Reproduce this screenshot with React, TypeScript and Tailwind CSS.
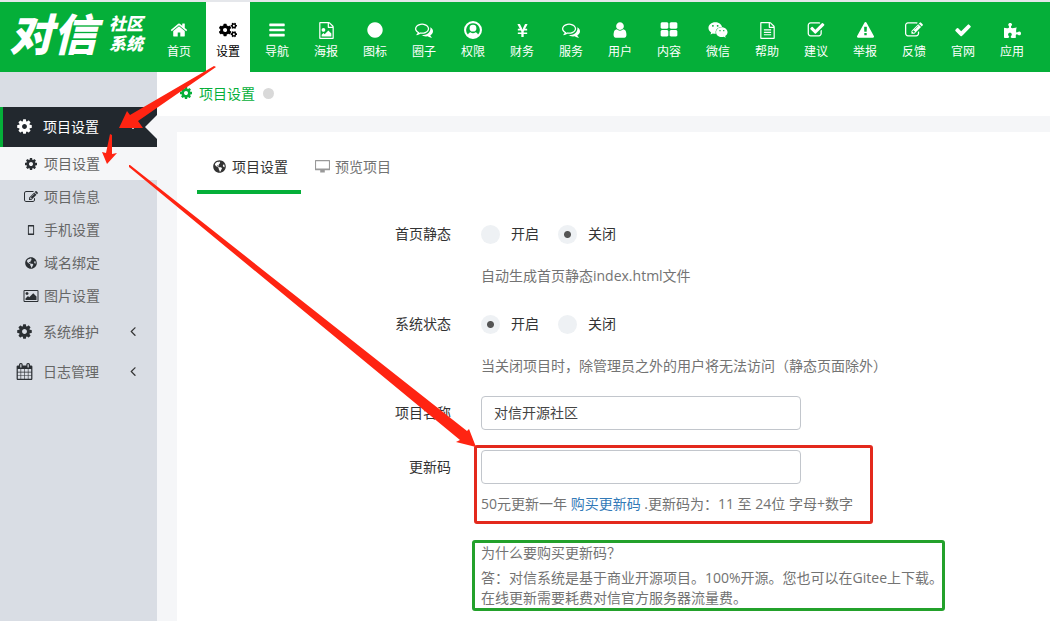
import React, { useState } from 'react';
import { FaCogs, FaGlobeAmericas, FaPuzzlePiece, FaWeixin, FaYenSign } from 'react-icons/fa';

const paths = {
    home: 'M1472 992v480q0 26-19 45t-45 19h-384v-384h-256v384h-384q-26 0-45-19t-19-45v-480q0-1 .5-3t.5-3l575-474 575 474q1 2 1 6zm223-69l-62 74q-8 9-21 11h-3q-13 0-21-7l-692-577-692 577q-12 8-24 7-13-2-21-11l-62-74q-8-10-7-23.5t11-21.5l719-599q32-26 76-26t76 26l244 204v-195q0-14 9-23t23-9h192q14 0 23 9t9 23v408l219 182q10 8 11 21.5t-7 23.5z',
    cog: 'M1152 896q0-106-75-181t-181-75-181 75-75 181 75 181 181 75 181-75 75-181zm512-109v222q0 12-8 23t-20 13l-185 28q-19 54-39 91 35 50 107 138 10 12 10 25t-9 23q-27 37-99 108t-94 71q-12 0-26-9l-138-108q-44 23-91 38-16 136-29 186-7 28-36 28h-222q-14 0-24.5-8.5t-11.5-21.5l-28-184q-49-16-90-37l-141 107q-10 9-25 9-14 0-25-11-126-114-165-168-7-10-7-23 0-12 8-23 15-21 51-66.5t54-70.5q-27-50-41-99l-183-27q-13-2-21-12.5t-8-23.5v-222q0-12 8-23t19-13l186-28q14-46 39-92-40-57-107-138-10-12-10-24 0-10 9-23 26-36 98.5-107.5t94.5-71.5q13 0 26 10l138 107q44-23 91-38 16-136 29-186 7-28 36-28h222q14 0 24.5 8.5t11.5 21.5l28 184q49 16 90 37l142-107q9-9 24-9 13 0 25 10 129 119 165 170 7 8 7 22 0 12-8 23-15 21-51 66.5t-54 70.5q26 50 41 98l183 28q13 2 21 12.5t8 23.5z',
    bars: 'M1664 1344v128q0 26-19 45t-45 19h-1408q-26 0-45-19t-19-45v-128q0-26 19-45t45-19h1408q26 0 45 19t19 45zm0-512v128q0 26-19 45t-45 19h-1408q-26 0-45-19t-19-45v-128q0-26 19-45t45-19h1408q26 0 45 19t19 45zm0-512v128q0 26-19 45t-45 19h-1408q-26 0-45-19t-19-45v-128q0-26 19-45t45-19h1408q26 0 45 19t19 45z',
    fileImage: 'M1596 380q28 28 48 76t20 88v1152q0 40-28 68t-68 28h-1344q-40 0-68-28t-28-68v-1600q0-40 28-68t68-28h896q40 0 88 20t76 48zm-444-244v376h376q-10-29-22-41l-313-313q-12-12-41-22zm384 1528v-1024h-416q-40 0-68-28t-28-68v-416h-768v1536h1280zm-128-448v320h-1024v-192l192-192 128 128 384-384zm-832-192q-80 0-136-56t-56-136 56-136 136-56 136 56 56 136-56 136-136 56z',
    circle: 'M1664 896q0 209-103 385.5t-279.5 279.5-385.5 103-385.5-103-279.5-279.5-103-385.5 103-385.5 279.5-279.5 385.5-103 385.5 103 279.5 279.5 103 385.5z',
    comments: 'M704 384q-153 0-286 52t-211.5 141-78.5 191q0 82 53 158t149 132l97 56-35 84q34-20 62-39l44-31 53 10q78 14 153 14 153 0 286-52t211.5-141 78.5-191-78.5-191-211.5-141-286-52zm0-128q191 0 353.5 68.5t256.5 186.5 94 257-94 257-256.5 186.5-353.5 68.5q-86 0-176-16-124 88-278 128-36 9-86 16h-3q-11 0-20.5-8t-11.5-21q-1-3-1-6.5t.5-6.5 2-6l2.5-5 3.5-5.5 4-5 4.5-5 4-4.5q5-6 23-25t26-29.5 22.5-29 25-38.5 20.5-44q-124-72-195-177t-71-224q0-139 94-257t256.5-186.5 353.5-68.5zm822 1169q10 24 20.5 44t25 38.5 22.5 29 26 29.5 23 25q1 1 4 4.5t4.5 5 4 5 3.5 5.5l2.5 5 2 6 .5 6.5-1 6.5q-3 14-13 22t-22 7q-50-7-86-16-154-40-278-128-90 16-176 16-271 0-472-132 58 4 88 4 161 0 309-45t264-129q125-92 192-212t67-254q0-77-23-152 129 71 204 178t75 230q0 120-71 224.5t-195 176.5z',
    userCircle: 'M896 0a896 896 0 1 0 0 1792a896 896 0 1 0 0-1792zm0 220a676 676 0 0 1 500 1130q-70-190-250-220q-110 90-250 90t-250-90q-180 30-250 220a676 676 0 0 1 500-1130zm0 150a340 340 0 1 0 0 680a340 340 0 1 0 0-680z',
    user: 'M1536 1399q0 109-62.5 187t-150.5 78h-854q-88 0-150.5-78t-62.5-187q0-85 8.5-160.5t31.5-152 58.5-131 94-89 134.5-34.5q131 128 313 128t313-128q76 0 134.5 34.5t94 89 58.5 131 31.5 152 8.5 160.5zm-256-887q0 159-112.5 271.5t-271.5 112.5-271.5-112.5-112.5-271.5 112.5-271.5 271.5-112.5 271.5 112.5 112.5 271.5z',
    blocks: 'M832 1024v384q0 52-38 90t-90 38h-512q-52 0-90-38t-38-90v-384q0-52 38-90t90-38h512q52 0 90 38t38 90zm0-768v384q0 52-38 90t-90 38h-512q-52 0-90-38t-38-90v-384q0-52 38-90t90-38h512q52 0 90 38t38 90zm896 768v384q0 52-38 90t-90 38h-512q-52 0-90-38t-38-90v-384q0-52 38-90t90-38h512q52 0 90 38t38 90zm0-768v384q0 52-38 90t-90 38h-512q-52 0-90-38t-38-90v-384q0-52 38-90t90-38h512q52 0 90 38t38 90z',
    fileText: 'M1596 380q28 28 48 76t20 88v1152q0 40-28 68t-68 28h-1344q-40 0-68-28t-28-68v-1600q0-40 28-68t68-28h896q40 0 88 20t76 48zm-444-244v376h376q-10-29-22-41l-313-313q-12-12-41-22zm384 1528v-1024h-416q-40 0-68-28t-28-68v-416h-768v1536h1280zm-1024-864q0-14 9-23t23-9h704q14 0 23 9t9 23v64q0 14-9 23t-23 9h-704q-14 0-23-9t-9-23v-64zm736 224q14 0 23 9t9 23v64q0 14-9 23t-23 9h-704q-14 0-23-9t-9-23v-64q0-14 9-23t23-9h704zm0 256q14 0 23 9t9 23v64q0 14-9 23t-23 9h-704q-14 0-23-9t-9-23v-64q0-14 9-23t23-9h704z',
    checkSquare: 'M1472 930v318q0 119-84.5 203.5t-203.5 84.5h-832q-119 0-203.5-84.5t-84.5-203.5v-832q0-119 84.5-203.5t203.5-84.5h832q63 0 117 25 15 7 18 23 3 17-9 29l-49 49q-10 10-23 10-3 0-9-2-23-6-45-6h-832q-66 0-113 47t-47 113v832q0 66 47 113t113 47h832q66 0 113-47t47-113v-254q0-13 9-22l64-64q10-10 23-10 6 0 12 3 20 8 20 29zm231-489l-814 814q-24 24-57 24t-57-24l-430-430q-24-24-24-57t24-57l110-110q24-24 57-24t57 24l263 263 647-647q24-24 57-24t57 24l110 110q24 24 24 57t-24 57z',
    warning: 'M1024 1375v-190q0-14-9.5-23.5t-22.5-9.5h-192q-13 0-22.5 9.5t-9.5 23.5v190q0 14 9.5 23.5t22.5 9.5h192q13 0 22.5-9.5t9.5-23.5zm-2-374l18-459q0-12-10-19-13-11-24-11h-220q-11 0-24 11-10 7-10 21l17 457q0 10 10 16.5t24 6.5h185q14 0 23.5-6.5t10.5-16.5zm-14-934l768 1408q35 63-2 126-17 29-46.5 46t-63.5 17h-1536q-34 0-63.5-17t-46.5-46q-37-63-2-126l768-1408q17-31 47-49t65-18 65 18 47 49z',
    edit: 'M888 1184l116-116-152-152-116 116v56h96v96h56zm440-720q-16-16-33 1l-350 350q-17 17-1 33t33-1l350-350q17-17 1-33zm80 594v190q0 119-84.5 203.5t-203.5 84.5h-832q-119 0-203.5-84.5t-84.5-203.5v-832q0-119 84.5-203.5t203.5-84.5h832q63 0 117 25 15 7 18 23 3 17-9 29l-49 49q-14 14-32 8-23-6-45-6h-832q-66 0-113 47t-47 113v832q0 66 47 113t113 47h832q66 0 113-47t47-113v-126q0-13 9-22l64-64q15-15 35-7t20 29zm-96-738l288 288-672 672h-288v-288zm444 132l-92 92-288-288 92-92q28-28 68-28t68 28l152 152q28 28 28 68t-28 68z',
    check: 'M1671 566q0 40-28 68l-724 724-136 136q-28 28-68 28t-68-28l-136-136-362-362q-28-28-28-68t28-68l136-136q28-28 68-28t68 28l294 295 656-657q28-28 68-28t68 28l136 136q28 28 28 68z',
    picture: 'M576 576q0 80-56 136t-136 56-136-56-56-136 56-136 136-56 136 56 56 136zm1024 384v448h-1408v-192l320-320 160 160 512-512zm96-704h-1600q-13 0-22.5 9.5t-9.5 22.5v1216q0 13 9.5 22.5t22.5 9.5h1600q13 0 22.5-9.5t9.5-22.5v-1216q0-13-9.5-22.5t-22.5-9.5zm160 32v1216q0 66-47 113t-113 47h-1600q-66 0-113-47t-47-113v-1216q0-66 47-113t113-47h1600q66 0 113 47t47 113z',
    calendar: 'M192 1664h288v-288h-288v288zm352 0h320v-288h-320v288zm-352-352h288v-320h-288v320zm352 0h320v-320h-320v320zm-352-384h288v-288h-288v288zm736 736h320v-288h-320v288zm-384-736h320v-288h-320v288zm768 736h288v-288h-288v288zm-384-352h320v-320h-320v320zm-352-864v-288q0-13-9.5-22.5t-22.5-9.5h-64q-13 0-22.5 9.5t-9.5 22.5v288q0 13 9.5 22.5t22.5 9.5h64q13 0 22.5-9.5t9.5-22.5zm736 864h288v-320h-288v320zm-384-384h320v-288h-320v288zm384 0h288v-288h-288v288zm32-480v-288q0-13-9.5-22.5t-22.5-9.5h-64q-13 0-22.5 9.5t-9.5 22.5v288q0 13 9.5 22.5t22.5 9.5h64q13 0 22.5-9.5t9.5-22.5zm384-64v1280q0 52-38 90t-90 38h-1408q-52 0-90-38t-38-90v-1280q0-52 38-90t90-38h128v-96q0-66 47-113t113-47h64q66 0 113 47t47 113v96h384v-96q0-66 47-113t113-47h64q66 0 113 47t47 113v96h128q52 0 90 38t38 90z',
    mobile: 'M560 256h672q60 0 60 60v1160q0 60-60 60h-672q-60 0-60-60v-1160q0-60 60-60zm60 200v880h552v-880z',
    desktop: 'M64 128h1664q64 0 64 64v1088q0 64-64 64h-560v256h-544v-256h-560q-64 0-64-64v-1088q0-64 64-64zm64 128v864h1536v-864z',
    angleLeft: 'M1203 544q0 13-10 23l-393 393 393 393q10 10 10 23t-10 23l-50 50q-10 10-23 10t-23-10l-466-466q-10-10-10-23t10-23l466-466q10-10 23-10t23 10l50 50q10 10 10 23z',
    angleDown: 'M1395 736q0 13-10 23l-466 466q-10 10-23 10t-23-10l-466-466q-10-10-10-23t10-23l50-50q10-10 23-10t23 10l393 393 393-393q10-10 23-10t23 10l50 50q10 10 10 23z',
};

type IconName = keyof typeof paths;

const Icon = ({ name, className }: { name: IconName; className?: string }) => (
    <svg viewBox="0 0 1792 1792" fill="currentColor" fillRule="evenodd" overflow="visible" aria-hidden="true" className={className}>
        <path d={paths[name]} />
    </svg>
);

const navItems: { label: string; icon: React.ReactNode }[] = [
    { label: '首页', icon: <Icon name="home" className="size-[18px]" /> },
    { label: '设置', icon: <FaCogs className="size-[18px]" /> },
    { label: '导航', icon: <Icon name="bars" className="size-[18px]" /> },
    { label: '海报', icon: <Icon name="fileImage" className="size-[17px]" /> },
    { label: '图标', icon: <Icon name="circle" className="size-[18px]" /> },
    { label: '圈子', icon: <Icon name="comments" className="size-[18px]" /> },
    { label: '权限', icon: <Icon name="userCircle" className="size-[18px]" /> },
    { label: '财务', icon: <FaYenSign className="size-[15px]" /> },
    { label: '服务', icon: <Icon name="comments" className="size-[18px]" /> },
    { label: '用户', icon: <Icon name="user" className="size-[18px]" /> },
    { label: '内容', icon: <Icon name="blocks" className="size-[18px]" /> },
    { label: '微信', icon: <FaWeixin className="size-[20px]" /> },
    { label: '帮助', icon: <Icon name="fileText" className="size-[17px]" /> },
    { label: '建议', icon: <Icon name="checkSquare" className="size-[18px]" /> },
    { label: '举报', icon: <Icon name="warning" className="size-[17px]" /> },
    { label: '反馈', icon: <Icon name="edit" className="size-[18px]" /> },
    { label: '官网', icon: <Icon name="check" className="size-[18px]" /> },
    { label: '应用', icon: <FaPuzzlePiece className="size-[17px]" /> },
];

const subItems: { label: string; icon: React.ReactNode }[] = [
    { label: '项目设置', icon: <Icon name="cog" className="size-[14px]" /> },
    { label: '项目信息', icon: <Icon name="edit" className="size-[14px]" /> },
    { label: '手机设置', icon: <Icon name="mobile" className="size-[14px]" /> },
    { label: '域名绑定', icon: <FaGlobeAmericas className="size-[12px]" /> },
    { label: '图片设置', icon: <Icon name="picture" className="size-[14px]" /> },
];

const Header = () => {
    const [active, setActive] = useState('设置');

    return (
        <header className="flex h-[72px] overflow-hidden border-t-2 border-gray-200 bg-[#05af39] text-white">
            <a href="#" className="flex w-[157px] shrink-0 items-center gap-3 pb-[6px] pl-[9px] font-black italic">
                <span className="text-[44px] leading-[44px]">对信</span>
                <span className="flex flex-col text-[17px] leading-5">
                    <span>社区</span>
                    <span>系统</span>
                </span>
            </a>
            <nav className="flex">
                {navItems.map((item) => (
                    <button
                        key={item.label}
                        type="button"
                        onClick={() => setActive(item.label)}
                        className={`mr-[5px] flex w-11 shrink-0 flex-col items-center pt-[18px] text-[12px] leading-[18px] ${active === item.label ? 'bg-white text-black' : ''}`}
                    >
                        <span className="flex h-5 items-center">{item.icon}</span>
                        <span className="mt-[3px]">{item.label}</span>
                    </button>
                ))}
            </nav>
        </header>
    );
};

const Sidebar = () => (
    <aside className="w-[157px] shrink-0 bg-[#d9dde4] pt-[35px] text-[14px] text-[#666]">
        <a href="#" className="relative flex h-10 items-center border-l-[3px] border-[#05af39] bg-[#22282e] pb-[2px] pl-[13px] text-white">
            <Icon name="cog" className="size-[17px]" />
            <span className="ml-[10px]">项目设置</span>
            <Icon name="angleDown" className="ml-[26px] size-[16px]" />
            <svg viewBox="0 0 12 24" className="absolute top-2 right-0 h-6 w-3" fill="#f5f6f8">
                <path d="M12 0L0 12l12 12z" />
            </svg>
        </a>
        <ul>
            {subItems.map((item, i) => (
                <li key={item.label}>
                    <a href="#" className={`flex h-[33px] items-center pl-[22px] ${i === 0 ? 'bg-[#f5f6f8]' : ''}`}>
                        <span className="flex w-[18px] justify-center text-[#2b2f33]">{item.icon}</span>
                        <span className="ml-1">{item.label}</span>
                    </a>
                </li>
            ))}
        </ul>
        <a href="#" className="flex h-10 items-center pb-[2px] pl-4">
            <Icon name="cog" className="size-[17px] text-[#2b2f33]" />
            <span className="ml-[10px]">系统维护</span>
            <Icon name="angleLeft" className="ml-[26px] size-[16px] text-[#333]" />
        </a>
        <a href="#" className="flex h-10 items-center pb-[2px] pl-4">
            <Icon name="calendar" className="size-[17px] text-[#2b2f33]" />
            <span className="ml-[10px]">日志管理</span>
            <Icon name="angleLeft" className="ml-[26px] size-[16px] text-[#333]" />
        </a>
    </aside>
);

const Radios = ({ name, label, initial }: { name: string; label: string; initial: string }) => {
    const [value, setValue] = useState(initial);

    return (
        <div role="radiogroup" aria-label={label} className="flex h-5 items-center gap-[19px]">
            {['开启', '关闭'].map((option) => (
                <label key={option} className="flex items-center gap-[11px] text-[#333]">
                    <input
                        type="radio"
                        name={name}
                        checked={value === option}
                        onChange={() => setValue(option)}
                        className="size-[19px] appearance-none rounded-full bg-[#eef1f4] checked:bg-[radial-gradient(circle,#555_3px,#eef1f4_4px)]"
                    />
                    {option}
                </label>
            ))}
        </div>
    );
};

const SettingsForm = () => {
    const [title, setTitle] = useState('对信开源社区');
    const [code, setCode] = useState('');

    return (
        <form className="pt-[30px] text-[14px] leading-5 text-[#737373]" onSubmit={(e) => e.preventDefault()}>
            <div className="flex gap-[30px]">
                <span className="w-[254px] shrink-0 text-right text-[#333]">首页静态</span>
                <div>
                    <Radios name="static" label="首页静态" initial="关闭" />
                    <p className="mt-[22px]">自动生成首页静态index.html文件</p>
                </div>
            </div>
            <div className="mt-7 flex gap-[30px]">
                <span className="w-[254px] shrink-0 text-right text-[#333]">系统状态</span>
                <div>
                    <Radios name="status" label="系统状态" initial="开启" />
                    <p className="mt-[22px]">当关闭项目时，除管理员之外的用户将无法访问（静态页面除外）</p>
                </div>
            </div>
            <div className="mt-5 flex gap-[30px]">
                <label htmlFor="title" className="w-[254px] shrink-0 pt-[7px] text-right text-[#333]">项目名称</label>
                <input
                    id="title"
                    type="text"
                    value={title}
                    onChange={(e) => setTitle(e.target.value)}
                    className="h-[34px] w-80 rounded-[4px] border border-[#c2c6cc] px-3 pb-[2px] text-[#444] outline-none"
                />
            </div>
            <div className="mt-[15px] flex gap-[23px]">
                <label htmlFor="code" className="w-[254px] shrink-0 pt-3 text-right text-[#333]">更新码</label>
                <div className="w-[399px] rounded-[3px] border-3 border-[#e3291d] px-1 pt-[2px] pb-[7px]">
                    <input
                        id="code"
                        type="text"
                        value={code}
                        onChange={(e) => setCode(e.target.value)}
                        className="block h-[34px] w-80 rounded-[4px] border border-[#c2c6cc] px-3 pb-[2px] text-[#444] outline-none"
                    />
                    <p className="mt-[10px] whitespace-nowrap">
                        50元更新一年 <a href="#" className="text-[#337ab7]">购买更新码</a> .更新码为：11 至 24位 字母+数字
                    </p>
                </div>
            </div>
            <div className="mt-4 ml-[275px] w-[473px] rounded-[3px] border-3 border-[#23a12b] px-[6px] whitespace-nowrap">
                <p>为什么要购买更新码？</p>
                <p className="mt-[5px]">
                    答：对信系统是基于商业开源项目。100%开源。您也可以在Gitee上下载。
                    <br />
                    在线更新需要耗费对信官方服务器流量费。
                </p>
            </div>
        </form>
    );
};

// Red guide arrows drawn over the page
const GuideArrows = () => (
    <svg width="490" height="460" viewBox="0 0 490 460" fill="#ff2412" aria-hidden="true" className="pointer-events-none absolute top-0 left-0">
        <path d="M214 66L216 67L138 121L143 128L119 128L127 111L130 115Z" />
        <path d="M110 134L112 135L112 154L117 153L107 164L102 152L106 153Z" />
        <path d="M129 165L130 165L467 431L469 429L476 447L456 442L460 440L129 167Z" />
    </svg>
);

const App = () => (
    <div className="relative flex min-h-screen flex-col overflow-hidden bg-white font-['Open_Sans','Noto_Sans_CJK_SC',sans-serif]">
        <Header />
        <div className="flex flex-1">
            <Sidebar />
            <main className="flex min-w-0 flex-1 flex-col bg-[#f5f6f8]">
                <div className="flex h-11 items-center bg-white pb-[2px] pl-[22px] text-[14px] text-[#05af39]">
                    <Icon name="cog" className="size-[14px]" />
                    <span className="ml-[6px]">项目设置</span>
                    <span className="ml-2 size-[11px] rounded-full bg-[#d9d9d9]" />
                </div>
                <section className="mt-4 ml-5 flex-1 bg-white px-5 pt-[15px]">
                    <div className="flex text-[14px]">
                        <button type="button" className="flex h-[47px] items-center gap-[6px] border-b-4 border-[#05af39] px-4 pr-[13px] pb-1 text-[#333]">
                            <FaGlobeAmericas className="size-[13px]" />
                            项目设置
                        </button>
                        <button type="button" className="flex h-[47px] items-center gap-[5px] border-b-4 border-transparent px-[14px] pb-1 text-[#737373]">
                            <Icon name="desktop" className="size-[15px] text-[#999]" />
                            预览项目
                        </button>
                    </div>
                    <SettingsForm />
                </section>
            </main>
        </div>
        <GuideArrows />
    </div>
);

export default App;
